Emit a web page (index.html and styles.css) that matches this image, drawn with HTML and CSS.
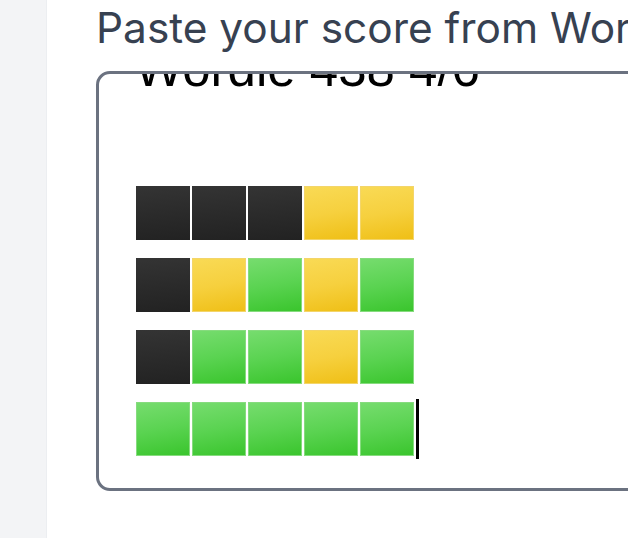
FILE: index.html
```html
<!DOCTYPE html>
<html>
<head>
<meta charset="utf-8">
<link rel="stylesheet" href="styles.css">
</head>
<body>
<div class="page">
  <aside class="sidebar"></aside>
  <main class="main">
    <h1 class="title">Paste your score from Wordle</h1>
    <div class="field">
      <div class="field-content">
        <div class="line text">Wordle 438 4/6</div>
        <div class="line"></div>
        <div class="line row"><span class="sq b"></span><span class="sq b"></span><span class="sq b"></span><span class="sq y"></span><span class="sq y"></span></div>
        <div class="line row"><span class="sq b"></span><span class="sq y"></span><span class="sq g"></span><span class="sq y"></span><span class="sq g"></span></div>
        <div class="line row"><span class="sq b"></span><span class="sq g"></span><span class="sq g"></span><span class="sq y"></span><span class="sq g"></span></div>
        <div class="line row"><span class="sq g"></span><span class="sq g"></span><span class="sq g"></span><span class="sq g"></span><span class="sq g"></span><span class="caret"></span></div>
      </div>
    </div>
  </main>
</div>
</body>
</html>
```
FILE: styles.css
```css
html, body {
  margin: 0;
  padding: 0;
  background: #ffffff;
}
.page {
  display: flex;
  width: 628px;
  height: 538px;
  overflow: hidden;
}
.sidebar {
  flex: 0 0 47px;
  background: #f3f4f6;
  box-shadow: inset -1px 0 0 #eceef1;
}
.main {
  flex: 0 0 auto;
  padding: 3px 0 0 49px;
}
.title {
  margin: 0;
  font-family: Inter, "Noto Sans", sans-serif;
  font-weight: 400;
  font-size: 42.4px;
  line-height: 50px;
  color: #374151;
  white-space: nowrap;
}
.field {
  margin-top: 18px;
  width: 760px;
  height: 414px;
  border: 3px solid #6b7280;
  border-radius: 14px;
  overflow: hidden;
  background: #fff;
}
.field-content {
  margin-top: -41px;
  padding-left: 37px;
}
.line {
  height: 72px;
  font-family: "Liberation Sans", Arial, sans-serif;
  font-size: 51px;
  line-height: 72px;
  color: #000;
  white-space: nowrap;
}
.text {
  margin-left: -1px;
}
.row {
  display: flex;
  align-items: center;
  gap: 2px;
}
.sq {
  width: 54px;
  height: 54px;
  box-sizing: border-box;
}
.b {
  background: linear-gradient(175deg, #343434 0%, #2a2a2a 55%, #222222 100%);
}
.y {
  background: linear-gradient(170deg, #f9da55 0%, #f6d03e 50%, #efbf16 100%);
  border: 1px solid #f3d56a;
}
.g {
  background: linear-gradient(170deg, #76dc6e 0%, #5ad351 50%, #3ac52d 100%);
  border: 1px solid #86db7e;
}
.caret {
  width: 3px;
  height: 60px;
  margin-left: 0;
  background: #000;
}
```
